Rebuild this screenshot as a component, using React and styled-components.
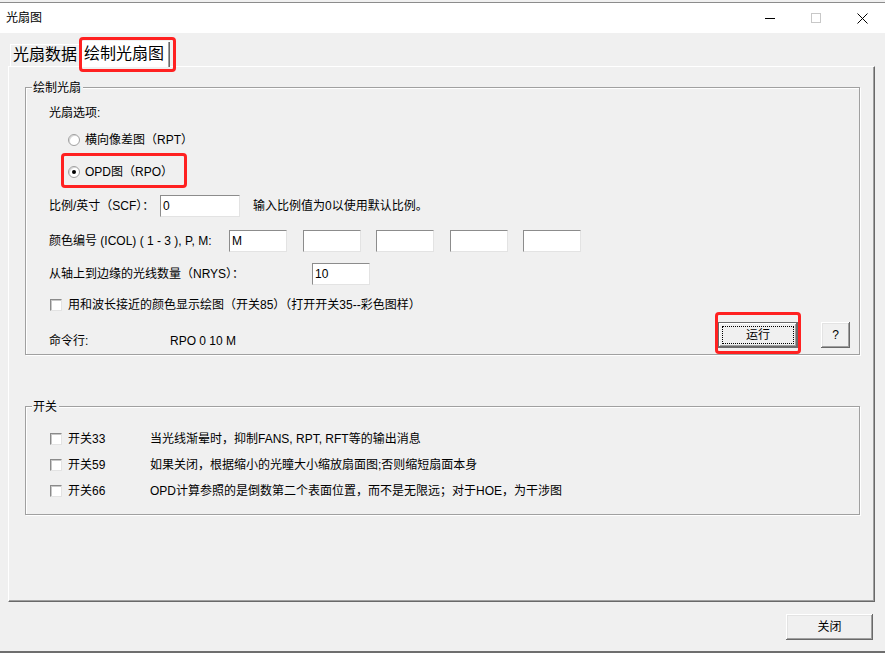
import * as React from 'react';
import styled, { createGlobalStyle, css } from "styled-components"

const GlobalStyle = createGlobalStyle`
  html, body {
    margin: 0;
    padding: 0;
    background: #f0f0f0;
    overflow: hidden;
  }
  body {
    font-family: "Liberation Sans", "Noto Sans CJK SC", sans-serif;
    font-size: 12px;
    color: #000;
  }
  *, *::before, *::after { box-sizing: border-box; }
`

// red annotation boxes drawn over the screenshot
const redMark = css`
  position: relative;
  &::after {
    content: "";
    position: absolute;
    left: ${(p) => p.$mark.l}px;
    top: ${(p) => p.$mark.t}px;
    width: ${(p) => p.$mark.w}px;
    height: ${(p) => p.$mark.h}px;
    border: 3px solid #ff2121;
    border-radius: 4px;
    pointer-events: none;
    z-index: 5;
  }
`

const Window = styled.div`
  width: 885px;
  height: 653px;
  padding-top: 2px;
  display: flex;
  flex-direction: column;
  background: #f0f0f0;
  border-bottom: 2px solid #6e6e6e;
`

const TitleBar = styled.div`
  height: 31px;
  border-top: 1px solid #8c8c8c;
  background: #ffffff;
  display: flex;
  align-items: center;
  padding-left: 6px;
`

const Title = styled.span`
  flex: 1;
  font-size: 12px;
  line-height: 14px;
`

const Ctrl = styled.div`
  width: 46px;
  height: 30px;
  display: flex;
  align-items: center;
  justify-content: center;
`

const TabStrip = styled.div`
  margin-top: 7px;
  height: 26px;
  padding-left: 10px;
  display: flex;
  align-items: flex-end;
`

const Tab = styled.div`
  height: ${(p) => (p.$active ? 26 : 22)}px;
  margin-bottom: ${(p) => (p.$active ? -1 : 0)}px;
  padding: 0 ${(p) => (p.$active ? 6 : 3)}px 0 ${(p) => (p.$active ? 4 : 3)}px;
  background: ${(p) => (p.$active ? "#ffffff" : "#f0f0f0")};
  box-shadow: ${(p) =>
    p.$active
      ? "inset 1px 1px 0 #ffffff, inset -1px 0 0 #696969, inset -2px 0 0 #a0a0a0"
      : "inset 1px 1px 0 #ffffff"};
  font-size: 16px;
  line-height: 22px;
  display: flex;
  align-items: center;
  z-index: ${(p) => (p.$active ? 2 : 1)};
  ${(p) => p.$mark && redMark}
`

const Panel = styled.div`
  margin-left: 8px;
  width: 867px;
  height: 536px;
  padding: 20px 0 0 16px;
  border: 1px solid;
  border-color: #ffffff #696969 #696969 #ffffff;
  box-shadow: inset -1px -1px 0 #a0a0a0;
`

const Group = styled.div`
  position: relative;
  width: 835px;
  margin-top: ${(p) => p.$mt || 0}px;
  padding: ${(p) => p.$pad};
  border: 1px solid #a0a0a0;
  box-shadow: inset 1px 1px 0 #ffffff, 1px 1px 0 #ffffff;
  display: flex;
  flex-direction: column;
`

const Legend = styled.span`
  position: absolute;
  left: 6px;
  top: -8px;
  padding: 0 2px 0 1px;
  background: #f0f0f0;
  line-height: 16px;
`

const Row = styled.div`
  height: ${(p) => p.$h || 22}px;
  margin-top: ${(p) => p.$mt || 0}px;
  padding-left: ${(p) => p.$pl || 0}px;
  display: flex;
  align-items: center;
  line-height: 16px;
  white-space: nowrap;
  ${(p) => p.$mark && redMark}
`

const Label = styled.span`
  width: ${(p) => (p.$w ? `${p.$w}px` : "auto")};
  flex-shrink: 0;
`

const Hint = styled.span`
  margin-left: 13px;
`

const Radio = styled.span`
  width: 12px;
  height: 12px;
  margin-right: 5px;
  border-radius: 50%;
  background: #ffffff;
  border: 1px solid #a0a0a0;
  box-shadow: inset 1px 1px 0 #d8d8d8;
  display: flex;
  align-items: center;
  justify-content: center;
  &::before {
    content: "";
    width: 4px;
    height: 4px;
    border-radius: 50%;
    background: ${(p) => (p.$checked ? "#000000" : "transparent")};
  }
`

const Check = styled.span`
  width: 12px;
  height: 12px;
  margin-left: 1px;
  margin-right: 6px;
  flex-shrink: 0;
  background: #ffffff;
  border: 1px solid;
  border-color: #8a8a8a #e3e3e3 #e3e3e3 #8a8a8a;
  box-shadow: inset 1px 1px 0 #c8c8c8;
`

const Field = styled.div`
  width: ${(p) => p.$w}px;
  height: 22px;
  flex-shrink: 0;
  background: #ffffff;
  border: 1px solid;
  border-color: #8c8c8c #e3e3e3 #e3e3e3 #8c8c8c;
  padding: 2px 0 0 2px;
  line-height: 16px;
`

const Fields = styled.div`
  display: flex;
  gap: 15.5px;
`

const SwitchName = styled.span`
  width: 82px;
  flex-shrink: 0;
`

const Spacer = styled.div`
  flex: 1;
`

const CmdLabel = styled.span`
  width: ${(p) => p.$w || 0}px;
  align-self: flex-end;
  line-height: 14px;
  flex-shrink: 0;
`

const Button = styled.button`
  width: ${(p) => p.$w}px;
  height: 26px;
  margin-left: ${(p) => p.$ml || 0}px;
  padding: 4px;
  border: none;
  background: #f0f0f0;
  font-family: inherit;
  font-size: 12px;
  color: #000;
  display: flex;
  align-items: stretch;
  box-shadow: ${(p) =>
    p.$default
      ? "inset 0 0 0 1px #6b6b6b, inset -2px -2px 0 #6b6b6b, inset 2px 2px 0 #ffffff, inset -3px -3px 0 #a0a0a0"
      : "inset -1px -1px 0 #696969, inset 1px 1px 0 #ffffff, inset -2px -2px 0 #a0a0a0, inset 2px 2px 0 #e3e3e3"};
  ${(p) => p.$mark && redMark}
`

const ButtonFace = styled.span`
  flex: 1;
  display: flex;
  align-items: center;
  justify-content: center;
  border: 1px dotted ${(p) => (p.$focus ? "#000000" : "transparent")};
  line-height: 14px;
`

const Footer = styled.div`
  margin-top: 12px;
  padding-right: 12px;
  display: flex;
  justify-content: flex-end;
`

const switches = [
  { name: "开关33", text: "当光线渐晕时，抑制FANS, RPT, RFT等的输出消息" },
  { name: "开关59", text: "如果关闭，根据缩小的光瞳大小缩放扇面图;否则缩短扇面本身" },
  { name: "开关66", text: "OPD计算参照的是倒数第二个表面位置，而不是无限远；对于HOE，为干涉图" },
]

const colorFields = ["M", "", "", "", ""]

export default function App() {
  return (
    <Window>
      <GlobalStyle />
      <TitleBar>
        <Title>光扇图</Title>
        <Ctrl>
          <svg width="10" height="10" viewBox="0 0 10 10">
            <line x1="0" y1="5.5" x2="10" y2="5.5" stroke="#000" strokeWidth="1" />
          </svg>
        </Ctrl>
        <Ctrl>
          <svg width="10" height="10" viewBox="0 0 10 10">
            <rect x="0.5" y="0.5" width="9" height="9" fill="none" stroke="#c8c8c8" strokeWidth="1" />
          </svg>
        </Ctrl>
        <Ctrl>
          <svg width="11" height="11" viewBox="0 0 11 11">
            <path d="M0.5 0.5 L10.5 10.5 M10.5 0.5 L0.5 10.5" stroke="#000" strokeWidth="1" />
          </svg>
        </Ctrl>
      </TitleBar>

      <TabStrip>
        <Tab>光扇数据</Tab>
        <Tab $active $mark={{ l: -1, t: -4, w: 97, h: 35 }}>绘制光扇图</Tab>
      </TabStrip>

      <Panel>
        <Group $pad="14px 9px 6px 23px">
          <Legend>绘制光扇</Legend>
          <Row>光扇选项:</Row>
          <Row $mt={5} $pl={19}>
            <Radio />
            横向像差图（RPT）
          </Row>
          <Row $mt={10} $pl={19} $mark={{ l: 12, t: -8, w: 126, h: 35 }}>
            <Radio $checked />
            OPD图（RPO）
          </Row>
          <Row $mt={12}>
            <Label $w={111}>比例/英寸（SCF）：</Label>
            <Field $w={80}>0</Field>
            <Hint>输入比例值为0以使用默认比例。</Hint>
          </Row>
          <Row $mt={13}>
            <Label $w={180}>颜色编号 (ICOL) ( 1 - 3 ), P, M:</Label>
            <Fields>
              {colorFields.map((v, i) => (
                <Field key={i} $w={58}>{v}</Field>
              ))}
            </Fields>
          </Row>
          <Row $mt={11}>
            <Label $w={263}>从轴上到边缘的光线数量（NRYS）：</Label>
            <Field $w={58}>10</Field>
          </Row>
          <Row $mt={9}>
            <Check />
            用和波长接近的颜色显示绘图（开关85）（打开开关35--彩色图样）
          </Row>
          <Row $mt={5} $h={27}>
            <CmdLabel $w={121}>命令行:</CmdLabel>
            <CmdLabel>RPO 0 10 M</CmdLabel>
            <Spacer />
            <Button $w={80} $default $mark={{ l: -3, t: -10, w: 86, h: 42 }}>
              <ButtonFace $focus>运行</ButtonFace>
            </Button>
            <Button $w={29} $ml={23}>
              <ButtonFace>?</ButtonFace>
            </Button>
          </Row>
        </Group>

        <Group $mt={51} $pad="21px 9px 12px 23px">
          <Legend>开关</Legend>
          {switches.map((s, i) => (
            <Row key={s.name} $mt={i === 0 ? 0 : 4}>
              <Check />
              <SwitchName>{s.name}</SwitchName>
              {s.text}
            </Row>
          ))}
        </Group>
      </Panel>

      <Footer>
        <Button $w={87}>
          <ButtonFace>关闭</ButtonFace>
        </Button>
      </Footer>
    </Window>
  )
}
